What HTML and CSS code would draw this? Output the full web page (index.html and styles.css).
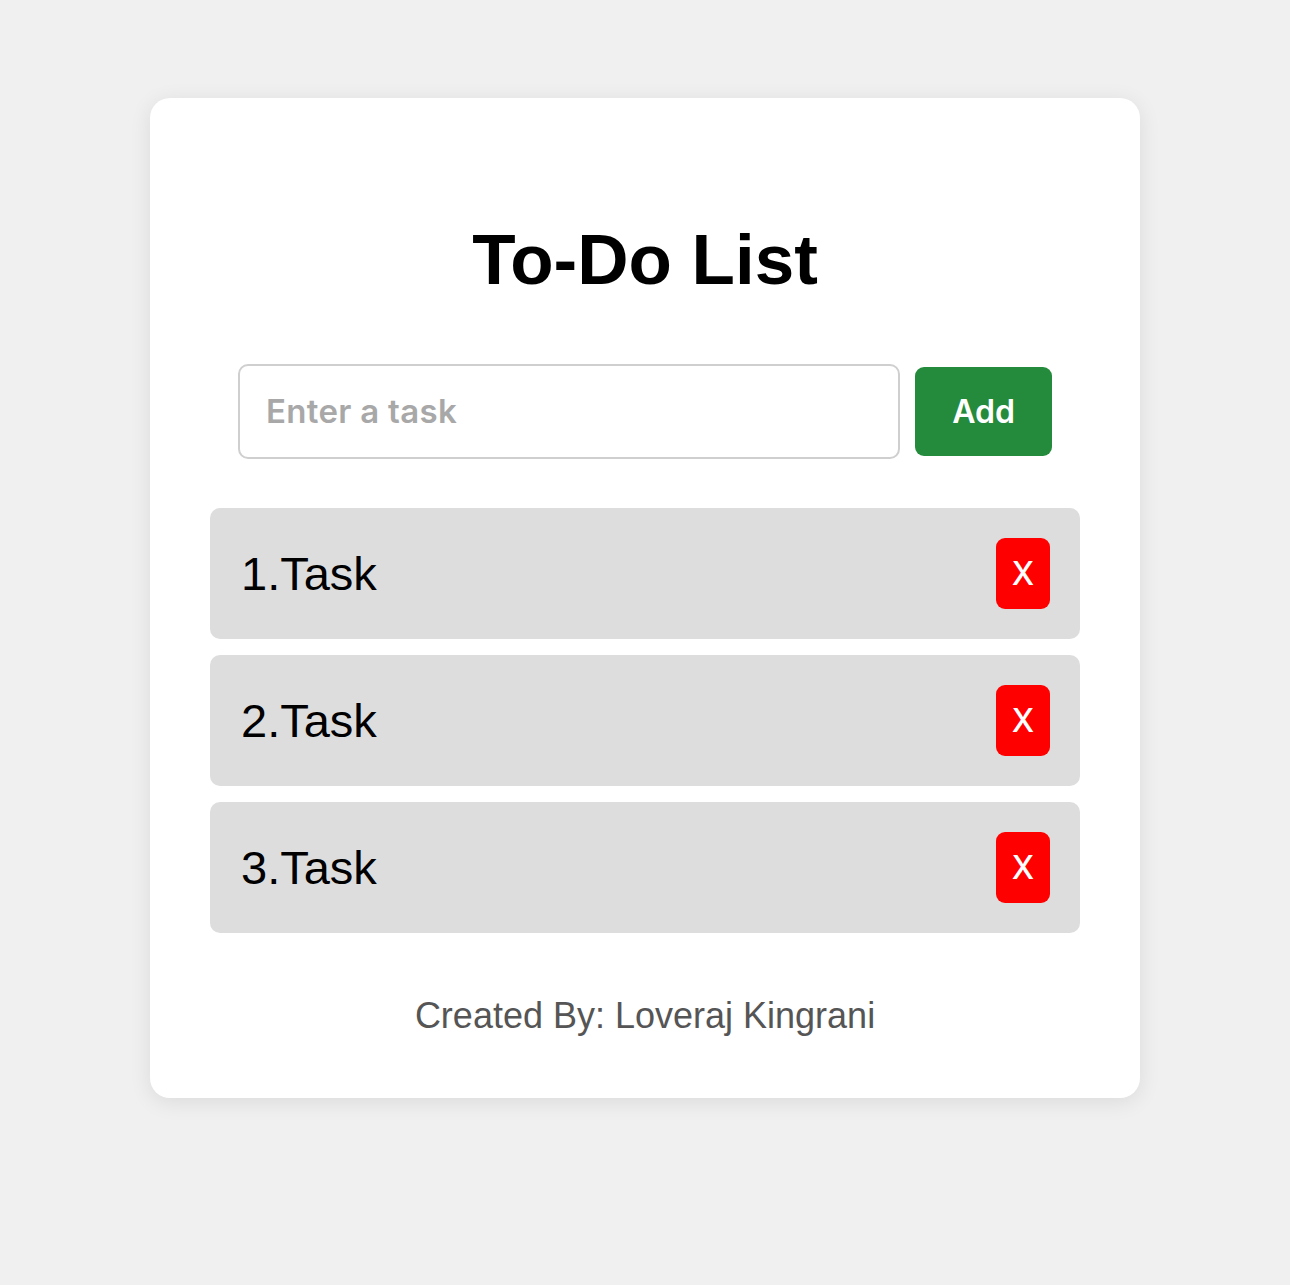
FILE: index.html
```html
<!DOCTYPE html>
<html lang="en">
<head>
<meta charset="utf-8">
<title>To-Do List</title>
<link rel="stylesheet" href="styles.css">
</head>
<body>
<main class="card">
  <h1 class="title">To-Do List</h1>
  <div class="input-row">
    <input class="task-input" type="text" placeholder="Enter a task">
    <button class="add-btn">Add</button>
  </div>
  <ul class="task-list">
    <li class="task"><span class="task-text">1.Task</span><button class="del-btn">X</button></li>
    <li class="task"><span class="task-text">2.Task</span><button class="del-btn">X</button></li>
    <li class="task"><span class="task-text">3.Task</span><button class="del-btn">X</button></li>
  </ul>
  <p class="footer">Created By: Loveraj Kingrani</p>
</main>
</body>
</html>
```

FILE: styles.css
```css
html, body {
  margin: 0;
  padding: 0;
}
body {
  background: #f0f0f0;
  font-family: "Liberation Sans", Arial, sans-serif;
  min-height: 1285px;
  padding-top: 98px;
  box-sizing: border-box;
}
.card {
  width: 990px;
  height: 1000px;
  box-sizing: border-box;
  margin: 0 auto;
  background: #fff;
  border-radius: 20px;
  box-shadow: 0 4px 22px rgba(0, 0, 0, 0.09);
  padding: 60px;
  display: flex;
  flex-direction: column;
}
.title {
  margin: 61px 0 0;
  font-size: 71px;
  line-height: 1.15;
  font-weight: 700;
  text-align: center;
  color: #000;
}
.input-row {
  display: flex;
  align-items: center;
  gap: 15px;
  padding: 0 28px;
  margin-top: 63px;
}
.task-input {
  flex: 1;
  height: 95px;
  box-sizing: border-box;
  border: 2px solid #cfcfcf;
  border-radius: 10px;
  padding: 0 26px;
  font-family: Inter, "Noto Sans", sans-serif;
  font-size: 33px;
  font-weight: 600;
  letter-spacing: 0.3px;
  outline: none;
}
.task-input::placeholder {
  color: #a8a8a8;
}
.add-btn {
  width: 137px;
  height: 89px;
  border: none;
  border-radius: 9px;
  background: #238b3b;
  color: #fff;
  font-family: Inter, "Noto Sans", sans-serif;
  font-size: 32px;
  font-weight: 600;
  padding: 0;
}
.task-list {
  list-style: none;
  margin: 49px 0 0;
  padding: 0;
  display: flex;
  flex-direction: column;
  gap: 16px;
}
.task {
  display: flex;
  align-items: center;
  justify-content: space-between;
  height: 131px;
  box-sizing: border-box;
  padding: 0 30px 0 31px;
  background: #dddddd;
  border-radius: 10px;
}
.task-text {
  font-size: 47px;
  color: #000;
}
.del-btn {
  width: 54px;
  height: 71px;
  border: none;
  border-radius: 9px;
  background: #ff0000;
  color: #fff;
  font-family: Inter, "Noto Sans", sans-serif;
  font-size: 32px;
  font-weight: 500;
  padding: 0;
}
.footer {
  margin: 62px 0 0;
  font-size: 36px;
  line-height: 1.15;
  text-align: center;
  color: #555;
}
```
